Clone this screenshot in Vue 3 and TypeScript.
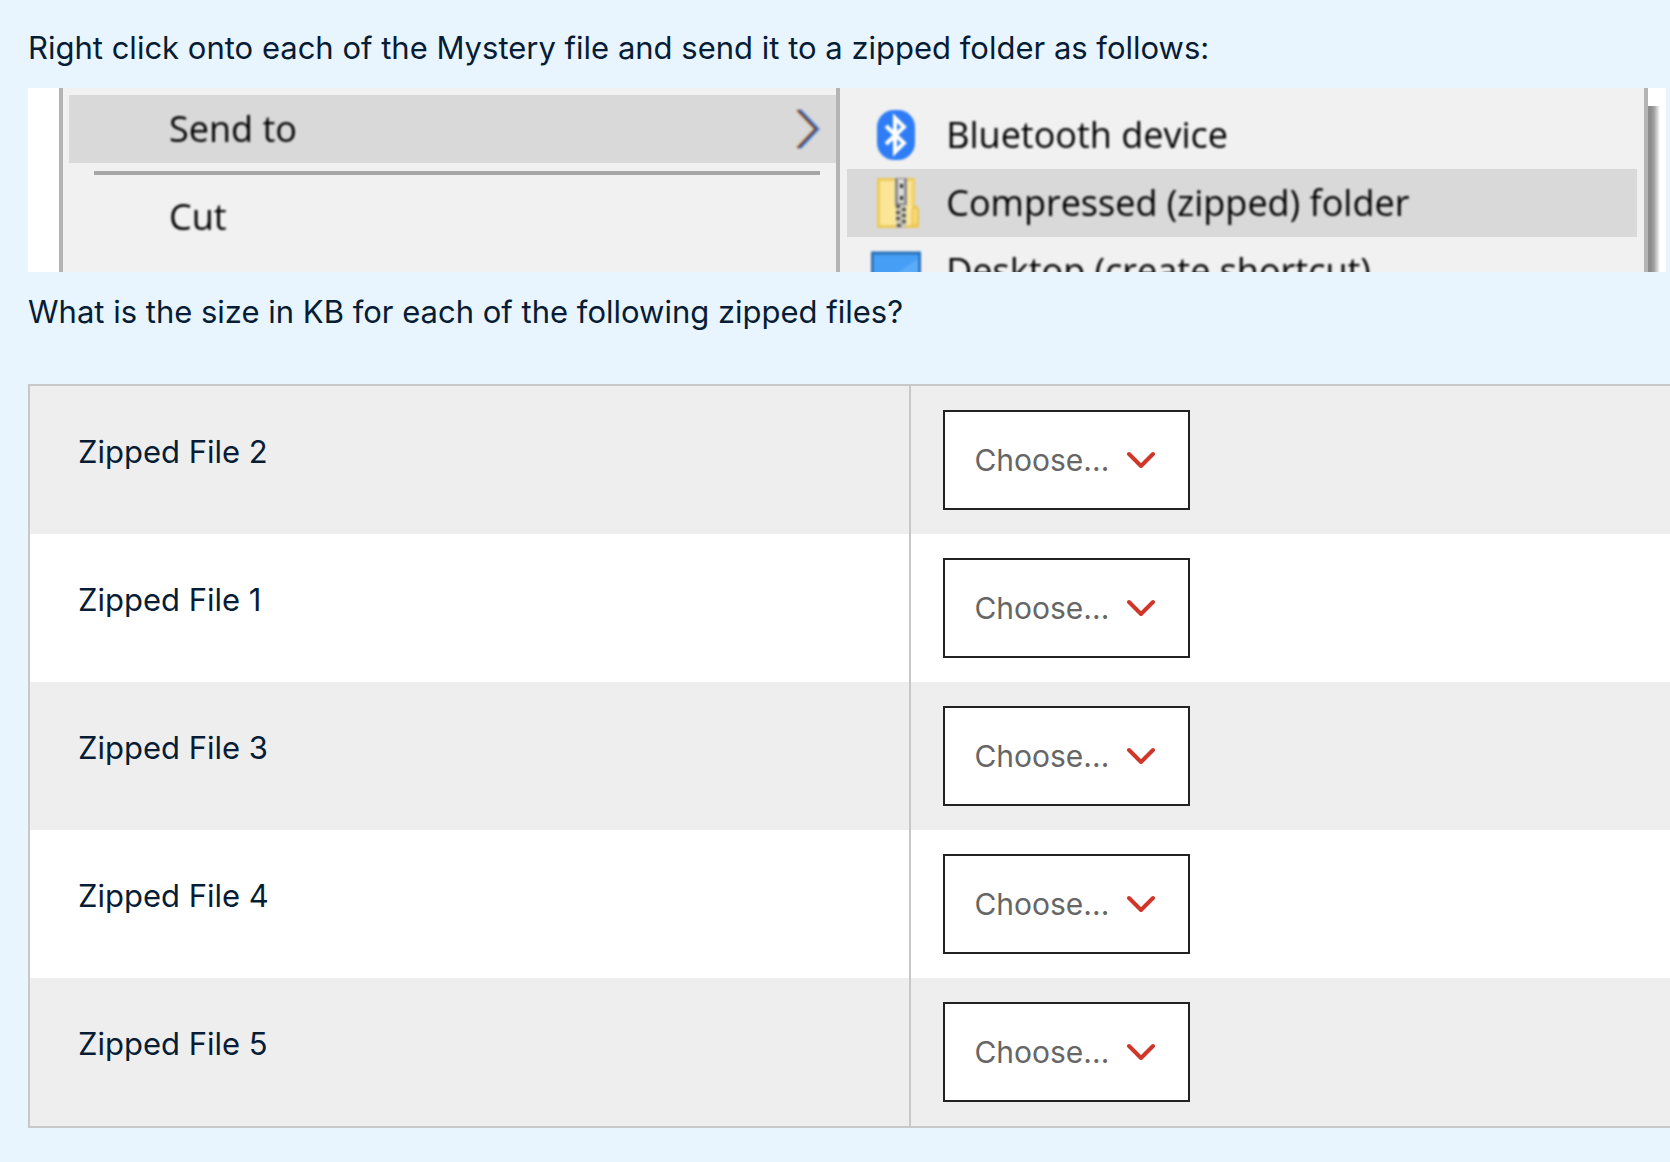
<script setup lang="ts">
import { reactive } from 'vue'

interface FileQuestion {
  id: string
  label: string
}

const questions: FileQuestion[] = [2, 1, 3, 4, 5].map((n) => ({
  id: `zipped-file-${n}`,
  label: `Zipped File ${n}`,
}))

const answers = reactive<Record<string, string>>(
  Object.fromEntries(questions.map((q) => [q.id, ''])),
)
</script>

<template>
  <main class="question">
    <p class="prompt">Right click onto each of the Mystery file and send it to a zipped folder as follows:</p>

    <figure class="capture">
      <div class="menu menu-main">
        <div class="entry entry-send">
          <span class="soft">Send to</span>
          <svg class="soft arrow" viewBox="0 0 26 44" fill="none" stroke-width="3">
            <path d="M3 3 21 22 3 41" stroke="#e0a860" />
            <path d="M6 3 24 22 6 41" stroke="#4a86d8" />
            <path d="M4 3 22 22 4 41" stroke="#5b3f50" stroke-width="2" />
          </svg>
        </div>
        <div class="rule"></div>
        <div class="entry entry-cut"><span class="soft">Cut</span></div>
      </div>
      <div class="menu menu-sub">
        <div class="entry">
          <svg class="icon soft" viewBox="0 0 50 52">
            <rect x="6" y="1" width="38" height="50" rx="17" fill="#2f7df6" />
            <path d="M15 17 33 34 24 43V9l9 9L15 35" fill="none" stroke="#fff" stroke-width="4" />
          </svg>
          <span class="soft">Bluetooth device</span>
        </div>
        <div class="entry entry-active">
          <svg class="icon soft" viewBox="0 0 50 52">
            <path d="M6 1h38v27l4 3v20H6z" fill="#eccb5c" />
            <path d="M9 4h32v44H9z" fill="#fbe697" />
            <path d="M40 3h3v26h-3z" fill="#f3d774" />
            <path d="M41 33l3-4 3 4v15h-6z" fill="#f6d972" stroke="#e2ba43" />
            <path d="M24 1h12v27l-3 3h-6l-3-3z" fill="#8b8b8b" />
            <path d="M27 2h6v24h-6z" fill="#d9d9d9" />
            <path d="M29 7h3v4h-3zM29 19h3v4h-3z" fill="#333" />
            <path d="M25 28h10v23H25z" fill="#c9c5b4" />
            <path d="M25 28h4v3h-4zM31 31h4v3h-4zM25 34h4v3h-4zM31 37h4v3h-4zM25 40h4v3h-4zM31 43h4v3h-4zM26 47h4v3h-4z" fill="#555" />
          </svg>
          <span class="soft">Compressed (zipped) folder</span>
        </div>
        <div class="entry">
          <svg class="icon soft" viewBox="0 0 50 52">
            <rect x="1" y="8" width="48" height="44" fill="#469ff5" stroke="#276fb4" stroke-width="3" />
            <path d="M26 28 47 14v28H20z" fill="#5aacf8" />
          </svg>
          <span class="soft">Desktop (create shortcut)</span>
        </div>
      </div>
      <div class="shade"></div>
    </figure>

    <p class="prompt">What is the size in KB for each of the following zipped files?</p>

    <table class="answers">
      <tbody>
        <tr v-for="q in questions" :key="q.id">
          <td class="name"><label :for="q.id">{{ q.label }}</label></td>
          <td class="control">
            <div class="picker">
              <select :id="q.id" v-model="answers[q.id]">
                <option value="">Choose...</option>
              </select>
              <svg class="chevron" viewBox="0 0 28 18" fill="none" aria-hidden="true">
                <path d="M2 3 14 15 26 3" stroke="#d0372b" stroke-width="4" stroke-linecap="round" stroke-linejoin="round" />
              </svg>
            </div>
          </td>
        </tr>
      </tbody>
    </table>
  </main>
</template>

<style>
body {
  margin: 0;
  background: #e8f4fe;
}
</style>

<style scoped>
.question {
  padding: 24px 0 34px 28px;
  font-family: Inter, sans-serif;
  font-size: 31px;
  line-height: 48px;
  color: #071c35;
}

.prompt {
  margin: 0;
}

.capture {
  display: flex;
  box-sizing: border-box;
  height: 184px;
  margin: 16px 4px 16px 0;
  padding-left: 31px;
  overflow: hidden;
  background: #fff;
  font-family: "Open Sans", sans-serif;
  font-size: 36px;
  color: #000;
}

.soft {
  filter: blur(1px);
}

.menu {
  box-sizing: border-box;
  border-left: 4px solid #b4b4b4;
  background: #f1f1f1;
}

.menu-main {
  flex: 783;
  padding: 7px 0 0 6px;
}

.menu-sub {
  flex: 806;
  padding: 13px 7px 0 7px;
  border-right: 4px solid #b4b4b4;
}

.entry {
  display: flex;
  align-items: center;
  height: 68px;
}

.entry-send {
  justify-content: space-between;
  padding: 0 16px 0 100px;
  background: #d9d9d9;
  line-height: 44px;
}

.entry-cut {
  padding-left: 100px;
}

.entry-active {
  background: #d9d9d9;
}

.arrow {
  width: 26px;
  height: 44px;
}

.rule {
  height: 4px;
  margin: 8px 16px 8px 25px;
  background: #a6a6a6;
}

.icon {
  flex: none;
  width: 50px;
  height: 52px;
  margin: 0 25px 0 24px;
}

.shade {
  width: 18px;
  margin-top: 18px;
  background: linear-gradient(to right, #8c8c8c 3px, #a0a0a0 6px, #fff 12px);
}

.answers {
  width: 100%;
  margin-top: 48px;
  border-collapse: separate;
  border-spacing: 0;
  border-top: 2px solid #c8c8c8;
  border-bottom: 2px solid #c8c8c8;
  table-layout: fixed;
}

.answers tr {
  background: #fff;
}

.answers tr:nth-child(odd) {
  background: #eee;
}

.answers td {
  box-sizing: border-box;
  padding: 0;
  vertical-align: top;
}

.answers .name {
  width: 53.8%;
  padding: 42px 48px 0;
  border-left: 2px solid #c8c8c8;
  border-right: 2px solid #c8c8c8;
}

.answers .control {
  padding: 24px 32px;
}

.picker {
  position: relative;
  width: 247px;
}

.picker select {
  display: block;
  box-sizing: border-box;
  width: 100%;
  height: 100px;
  padding: 0 60px 0 29px;
  border: 2px solid #222;
  border-radius: 0;
  appearance: none;
  background: #fff;
  font: inherit;
  font-size: 30px;
  color: #666;
}

.chevron {
  position: absolute;
  top: 41px;
  right: 35px;
  width: 28px;
  height: 18px;
  pointer-events: none;
}
</style>
